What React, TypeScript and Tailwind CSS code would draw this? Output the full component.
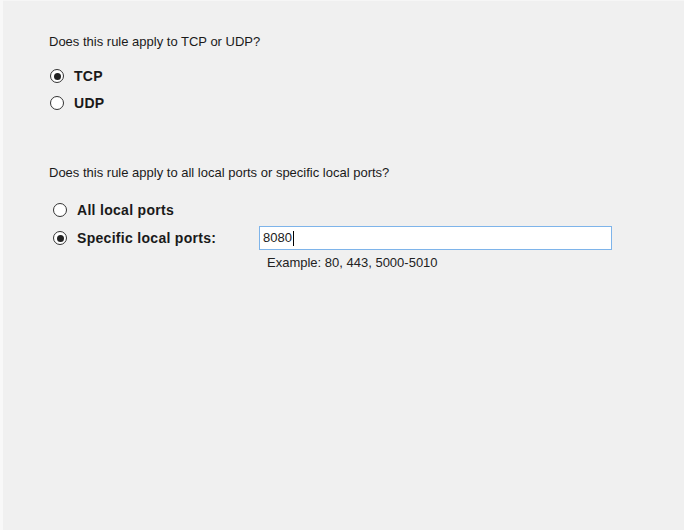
import React from "react";

function Radio({ checked }: { checked: boolean }) {
  return (
    <span className="flex h-[14px] w-[14px] shrink-0 items-center justify-center rounded-full border border-[#333333] bg-white">
      {checked && <span className="h-[7px] w-[7px] rounded-full bg-[#222222]" />}
    </span>
  );
}

export default function App() {
  return (
    <div
      className="flex h-[530px] w-[684px] bg-[#f0f0f0] text-[#1a1a1a]"
      style={{ fontFamily: '"Liberation Sans", Arial, sans-serif' }}
    >
      <div className="w-[3px] shrink-0 bg-[#f8f8f8]" />
      <div className="flex flex-1 flex-col border-t border-[#f6f6f6] pl-[46px] pt-[33px]">
        <div className="text-[13px] leading-[16px]">Does this rule apply to TCP or UDP?</div>
        <div className="mt-[18px] flex h-[16px] items-center gap-[10px] pl-[1px]">
          <Radio checked />
          <span className="text-[14px] font-bold leading-[16px] tracking-[0.3px]">TCP</span>
        </div>
        <div className="mt-[11px] flex h-[16px] items-center gap-[10px] pl-[1px]">
          <Radio checked={false} />
          <span className="text-[14px] font-bold leading-[16px] tracking-[0.3px]">UDP</span>
        </div>
        <div className="mt-[54px] text-[13px] leading-[16px]">
          Does this rule apply to all local ports or specific local ports?
        </div>
        <div className="mt-[21px] flex h-[16px] items-center gap-[10px] pl-[4px]">
          <Radio checked={false} />
          <span className="text-[14px] font-bold leading-[16px] tracking-[0.3px]">All local ports</span>
        </div>
        <div className="mt-[8px] flex items-center pl-[4px]">
          <div className="flex w-[206px] items-center gap-[10px]">
            <Radio checked />
            <span className="text-[14px] font-bold leading-[16px] tracking-[0.3px]">Specific local ports:</span>
          </div>
          <div className="flex h-[24px] w-[353px] items-center border border-[#7eb4ea] bg-white pl-[3px] text-[13px]">
            <span>8080</span>
            <span className="ml-[1px] h-[15px] w-[1px] bg-black" />
          </div>
        </div>
        <div className="mt-[5px] pl-[218px] text-[13px] leading-[16px] text-[#222222]">
          Example: 80, 443, 5000-5010
        </div>
      </div>
    </div>
  );
}
